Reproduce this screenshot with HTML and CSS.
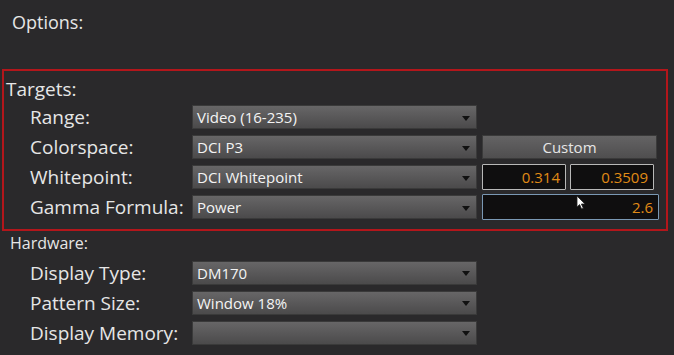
FILE: index.html
```html
<!DOCTYPE html>
<html>
<head>
<meta charset="utf-8">
<link rel="stylesheet" href="styles.css">
</head>
<body>
<div class="panel">
  <div class="title">Options:</div>
  <section class="targets">
    <div class="sec-head">Targets:</div>
    <div class="grid">
      <div class="label">Range:</div>
      <div class="dd"><span>Video (16-235)</span><i class="arrow"></i></div>
      <div></div>

      <div class="label">Colorspace:</div>
      <div class="dd"><span>DCI P3</span><i class="arrow"></i></div>
      <div class="extra"><div class="btn">Custom</div></div>

      <div class="label">Whitepoint:</div>
      <div class="dd"><span>DCI Whitepoint</span><i class="arrow"></i></div>
      <div class="extra pair"><div class="num">0.314</div><div class="num">0.3509</div></div>

      <div class="label">Gamma Formula:</div>
      <div class="dd"><span>Power</span><i class="arrow"></i></div>
      <div class="extra"><div class="num focus wide">2.6<svg class="cursor" width="10" height="15" viewBox="0 0 10 15"><path d="M1 1 L1 12 L3.6 9.6 L5.6 14 L7.3 13.2 L5.4 9 L9 9 Z" fill="#fff" stroke="#222" stroke-width="0.8"/></svg></div></div>
    </div>
  </section>
  <section class="hardware">
    <div class="sec-head small">Hardware:</div>
    <div class="grid hw">
      <div class="label">Display Type:</div>
      <div class="dd"><span>DM170</span><i class="arrow"></i></div>
      <div class="label">Pattern Size:</div>
      <div class="dd"><span>Window 18%</span><i class="arrow"></i></div>
      <div class="label">Display Memory:</div>
      <div class="dd"><span></span><i class="arrow"></i></div>
    </div>
  </section>
</div>
</body>
</html>
```
FILE: styles.css
```css
html, body {
  margin: 0;
  padding: 0;
  background: #2a292b;
  width: 674px;
  height: 355px;
  overflow: hidden;
}
.panel {
  font-family: "Open Sans", "Noto Sans", sans-serif;
  font-weight: 500;
  color: #e6e6e6;
}
.title {
  font-size: 18px;
  line-height: 24px;
  padding: 10px 0 0 12px;
  height: 60px;
  box-sizing: border-box;
}
.targets {
  margin: 9px 0 0 2px;
  width: 666px;
  height: 162px;
  box-sizing: border-box;
  border: 2px solid #b3161b;
  padding-top: 6px;
}
.sec-head {
  font-size: 19px;
  line-height: 24px;
  padding-left: 2px;
  height: 28px;
}
.grid {
  display: grid;
  grid-template-columns: 188px 285px 182px;
  grid-auto-rows: 24px;
  row-gap: 6px;
  align-items: center;
}
.label {
  font-size: 19px;
  padding-left: 26px;
  white-space: nowrap;
  line-height: 24px;
}
.dd {
  height: 24px;
  box-sizing: border-box;
  border: 1px solid #3a3a3a;
  background: linear-gradient(#676667, #4b4a4b);
  display: flex;
  align-items: center;
  justify-content: space-between;
  padding: 0 4px 0 4px;
  font-size: 15px;
  color: #f4f4f4;
}
.arrow {
  width: 0;
  height: 0;
  border-left: 4.5px solid transparent;
  border-right: 4.5px solid transparent;
  border-top: 5px solid #111;
  margin-right: 2px;
  margin-top: 2px;
}
.extra {
  padding-left: 5px;
}
.btn {
  width: 175px;
  height: 24px;
  box-sizing: border-box;
  background: linear-gradient(#646364, #4f4e4f);
  border: 1px solid #3a3a3a;
  color: #e6e6e6;
  font-size: 15px;
  display: flex;
  align-items: center;
  justify-content: center;
}
.pair {
  display: flex;
  gap: 4px;
  height: 26px;
}
.num {
  width: 84px;
  height: 26px;
  box-sizing: border-box;
  border: 1px solid #b8b8b8;
  border-radius: 1px;
  background: #0f0e0f;
  color: #e08b16;
  font-size: 15px;
  display: flex;
  align-items: center;
  justify-content: flex-end;
  padding-right: 5px;
  position: relative;
}
.num.wide {
  width: 177px;
}
.num.focus {
  border-color: #7a98b4;
}
.cursor {
  position: absolute;
  left: 93px;
  top: 0px;
}
.hardware {
  padding-top: 0px;
}
.sec-head.small {
  font-size: 16px;
  padding-left: 10px;
  height: 29px;
}
.grid.hw {
  grid-template-columns: 192px 285px;
  grid-auto-rows: 25px;
  row-gap: 5px;
}
.grid.hw .label {
  padding-left: 30px;
}
```
